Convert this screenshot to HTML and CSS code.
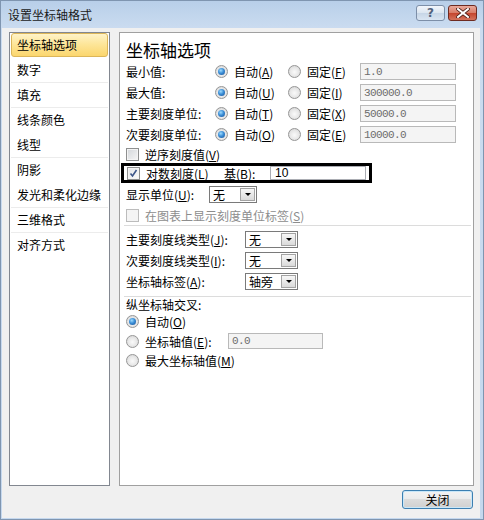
FILE: index.html
```html
<!DOCTYPE html>
<html lang="zh-CN">
<head>
<meta charset="utf-8">
<title>设置坐标轴格式</title>
<link rel="stylesheet" href="styles.css">
</head>
<body>
<div class="window">
  <div class="titlebar">
    <span class="title">设置坐标轴格式</span>
    <div class="tbtns">
      <span class="tb help">?</span>
      <span class="tb close"><svg width="14" height="10" viewBox="0 0 14 10"><path d="M2 1 L12 9 M12 1 L2 9" stroke="#4a1e16" stroke-width="3.6" stroke-linecap="square"/><path d="M2 1 L12 9 M12 1 L2 9" stroke="#ffffff" stroke-width="2" stroke-linecap="square"/></svg></span>
    </div>
  </div>
  <div class="body">
    <div class="panels">
      <ul class="nav">
        <li class="sel">坐标轴选项</li>
        <li class="sep">数字</li>
        <li class="sep">填充</li>
        <li>线条颜色</li>
        <li class="sep">线型</li>
        <li>阴影</li>
        <li class="sep">发光和柔化边缘</li>
        <li class="sep">三维格式</li>
        <li>对齐方式</li>
      </ul>
      <div class="content">
        <div class="heading">坐标轴选项</div>
        <div class="row">
          <span class="lbl">最小值:</span>
          <span class="opt"><span class="radio on"></span>自动(<u>A</u>)</span>
          <span class="opt2"><span class="radio"></span>固定(<u>F</u>)</span>
          <span class="inp dis">1.0</span>
        </div>
        <div class="row">
          <span class="lbl">最大值:</span>
          <span class="opt"><span class="radio on"></span>自动(<u>U</u>)</span>
          <span class="opt2"><span class="radio"></span>固定(<u>I</u>)</span>
          <span class="inp dis">300000.0</span>
        </div>
        <div class="row">
          <span class="lbl">主要刻度单位:</span>
          <span class="opt"><span class="radio on"></span>自动(<u>T</u>)</span>
          <span class="opt2"><span class="radio"></span>固定(<u>X</u>)</span>
          <span class="inp dis">50000.0</span>
        </div>
        <div class="row">
          <span class="lbl">次要刻度单位:</span>
          <span class="opt"><span class="radio on"></span>自动(<u>O</u>)</span>
          <span class="opt2"><span class="radio"></span>固定(<u>E</u>)</span>
          <span class="inp dis">10000.0</span>
        </div>
        <div class="crow r-rev">
          <span class="check"></span>逆序刻度值(<u>V</u>)
        </div>
        <div class="hl">
          <span class="check on"><svg width="11" height="11" viewBox="0 0 11 11"><path d="M2.5 5.5 L4.5 8 L8.5 2" fill="none" stroke="#3d5689" stroke-width="1.6"/></svg></span>
          <span class="hl-lbl">对数刻度(<u>L</u>)</span>
          <span class="base-lbl">基(<u>B</u>):</span>
          <span class="inp base">10</span>
        </div>
        <div class="row r-unit">
          <span class="lbl-unit">显示单位(<u>U</u>):</span>
          <span class="select s48"><span class="sv">无</span><span class="dd"><i></i></span></span>
        </div>
        <div class="crow r-show dis-text">
          <span class="check dis"></span>在图表上显示刻度单位标签(<u>S</u>)
        </div>
        <div class="sepline"></div>
        <div class="row r-tick first">
          <span class="lbl-tick">主要刻度线类型(<u>J</u>):</span>
          <span class="select s53"><span class="sv">无</span><span class="dd"><i></i></span></span>
        </div>
        <div class="row r-tick">
          <span class="lbl-tick">次要刻度线类型(<u>I</u>):</span>
          <span class="select s53"><span class="sv">无</span><span class="dd"><i></i></span></span>
        </div>
        <div class="row r-tick">
          <span class="lbl-tick">坐标轴标签(<u>A</u>):</span>
          <span class="select s53"><span class="sv">轴旁</span><span class="dd"><i></i></span></span>
        </div>
        <div class="sepline s2"></div>
        <div class="row r-cross">纵坐标轴交叉:</div>
        <div class="row r-c1"><span class="radio on"></span>自动(<u>O</u>)</div>
        <div class="row r-c2"><span class="radio"></span><span class="lbl-val">坐标轴值(<u>E</u>):</span><span class="inp dis val">0.0</span></div>
        <div class="row r-c3"><span class="radio"></span>最大坐标轴值(<u>M</u>)</div>
      </div>
    </div>
    <div class="footer">
      <button class="btn">关闭</button>
    </div>
  </div>
</div>
</body>
</html>
```

FILE: styles.css
```css
* { box-sizing: border-box; }
html, body { margin: 0; padding: 0; }
body {
  width: 484px;
  height: 520px;
  overflow: hidden;
  font-family: "Noto Sans CJK SC", "Noto Sans", sans-serif;
  font-size: 12px;
  color: #000;
}
.window {
  width: 484px;
  height: 520px;
  display: flex;
  flex-direction: column;
  border: 1px solid #7f95b0;
  background: linear-gradient(#b8cfe9 0, #cbdcf0 28px, #c5d8ee 100%);
}
.titlebar {
  height: 27px;
  display: flex;
  align-items: center;
  justify-content: space-between;
  padding: 0 6px 0 7px;
  flex: none;
}
.title { font-size: 12px; color: #1a1a1a; line-height: 1; margin-top: 1px; }
.tbtns { display: flex; gap: 3px; align-self: flex-start; margin-top: 4px; }
.tb {
  width: 29px;
  height: 16px;
  border-radius: 3px;
  display: flex;
  align-items: center;
  justify-content: center;
}
.help {
  border: 1px solid #7d8fa8;
  background: linear-gradient(#f2f6fb 0, #dbe5f0 50%, #c6d5e6 50%, #d9e5f2 100%);
  color: #52627c;
  font-family: "DejaVu Sans", sans-serif;
  font-size: 12px;
  font-weight: bold;
  line-height: 1;
}
.close {
  border: 1px solid #6e2b21;
  background: linear-gradient(#e9a99b 0, #d77b66 50%, #c4432b 50%, #d3735c 100%);
}
.body {
  flex: 1;
  margin: 0 3px 1px 1px;
  background: #f0f0f0;
  padding: 4px 6px 0 7px;
  display: flex;
  flex-direction: column;
}
.panels {
  height: 454px;
  display: flex;
  gap: 9px;
  flex: none;
}
.nav {
  list-style: none;
  margin: 0;
  width: 101px;
  border: 1px solid #828790;
  background: #fff;
  padding: 0 1px;
}
.nav li {
  height: 25px;
  line-height: 24px;
  padding-left: 6px;
  font-size: 12px;
  border-bottom: 1px solid transparent;
  white-space: nowrap;
}
.nav li.sep { border-bottom-color: #ececec; }
.nav li.sel {
  height: 24px;
  margin-bottom: 1px;
  line-height: 22px;
  padding-left: 5px;
  border: 1px solid #dcb659;
  border-radius: 3px;
  background: linear-gradient(#fff3c8 0, #fde69a 45%, #fbd66e 100%);
}
.content {
  width: 355px;
  border: 1px solid #a0a0a0;
  background: #fff;
  padding: 4px 5px 0 6px;
}
.heading {
  height: 24px;
  font-size: 17px;
  line-height: 24px;
  padding-top: 1px;
}
.row {
  display: flex;
  align-items: center;
  height: 21px;
  white-space: nowrap;
}
.lbl { width: 89px; }
.opt { width: 73px; display: flex; align-items: center; }
.opt2 { width: 72px; display: flex; align-items: center; }
.radio {
  position: relative;
  display: inline-block;
  flex: none;
  width: 13px;
  height: 13px;
  border-radius: 50%;
  border: 1px solid #969696;
  background: radial-gradient(circle at 50% 55%, #fafafa 0, #e8e8e8 50%, #cfcfcf 100%);
  margin-right: 6px;
}
.radio.on::after {
  content: "";
  position: absolute;
  left: 2px;
  top: 2px;
  width: 7px;
  height: 7px;
  border-radius: 50%;
  background: radial-gradient(circle at 40% 35%, #9fdcff 0, #3b8ed6 45%, #1a4f93 100%);
}
.inp {
  display: flex;
  align-items: center;
  width: 96px;
  height: 17px;
  border: 1px solid #abadb3;
  background: #fff;
  font-family: "Liberation Mono", "DejaVu Sans Mono", monospace;
  font-size: 11px;
  letter-spacing: -0.6px;
  padding-left: 3px;
}
.inp.dis {
  background: #f4f4f4;
  border-color: #b9b9b9;
  color: #6d6d6d;
}
.crow {
  display: flex;
  align-items: center;
  white-space: nowrap;
}
.r-rev { height: 18px; }
.check {
  position: relative;
  display: inline-block;
  flex: none;
  width: 13px;
  height: 13px;
  border: 1px solid #8e8f8f;
  background: linear-gradient(135deg, #d3d6da 0, #f6f6f6 100%);
  box-shadow: inset 0 0 0 1px #f4f4f4;
  margin-right: 6px;
}
.check svg { display: block; }
.check.on { background: linear-gradient(135deg, #e4e6ea 0, #fbfbfb 100%); }
.check.dis { border-color: #bcbcbc; background: #f4f4f4; box-shadow: none; }
.hl {
  display: flex;
  align-items: center;
  margin-left: -5px;
  width: 251px;
  height: 20px;
  border: 3px solid #000;
  padding-left: 3px;
  white-space: nowrap;
}
.hl-lbl { width: 78px; }
.base-lbl { width: 46px; }
.inp.base {
  height: 14px;
  width: 96px;
  font-family: "Liberation Sans", sans-serif;
  font-size: 12px;
  letter-spacing: 0;
  padding-left: 4px;
  color: #000;
}
.r-unit { height: 23px; }
.lbl-unit { width: 83px; }
.select {
  display: flex;
  height: 17px;
  border: 1px solid #7a7a7a;
  background: #fff;
  padding: 1px;
}
.s48 { width: 48px; }
.s53 { width: 53px; }
.sv { flex: 1; padding-left: 2px; line-height: 13px; font-size: 12px; }
.dd {
  width: 15px;
  border: 1px solid #a3a3a3;
  background: linear-gradient(#f7f7f7, #dadada);
  display: flex;
  align-items: center;
  justify-content: center;
}
.dd i {
  width: 0;
  height: 0;
  border-left: 3px solid transparent;
  border-right: 3px solid transparent;
  border-top: 3px solid #000;
}
.r-show { height: 18px; }
.dis-text { color: #8d8d8d; }
.sepline {
  height: 1px;
  background: #dcdcdc;
  margin: 1px -3px 0 -2px;
}
.r-tick.first { margin-top: 3px; }
.lbl-tick { width: 119px; }
.sepline.s2 { margin-top: 4px; }
.r-cross { height: 15px; }
.r-c1 { height: 19px; }
.r-c2 { height: 20px; }
.r-c3 { height: 18px; }
.lbl-val { width: 83px; }
.inp.val { width: 95px; height: 16px; }
.footer {
  display: flex;
  justify-content: flex-end;
  padding-top: 4px;
  padding-right: 1px;
}
.btn {
  width: 71px;
  height: 19px;
  border: 1px solid #3c7fb1;
  border-radius: 3px;
  background: linear-gradient(#f3f3f3 0, #ebebeb 50%, #dcdcdc 50%, #d0d0d0 100%);
  box-shadow: inset 0 0 0 1px #c9e7f8;
  font-family: "Noto Sans CJK SC", sans-serif;
  font-size: 12px;
  padding: 0;
  line-height: 15px;
  color: #000;
}
```
